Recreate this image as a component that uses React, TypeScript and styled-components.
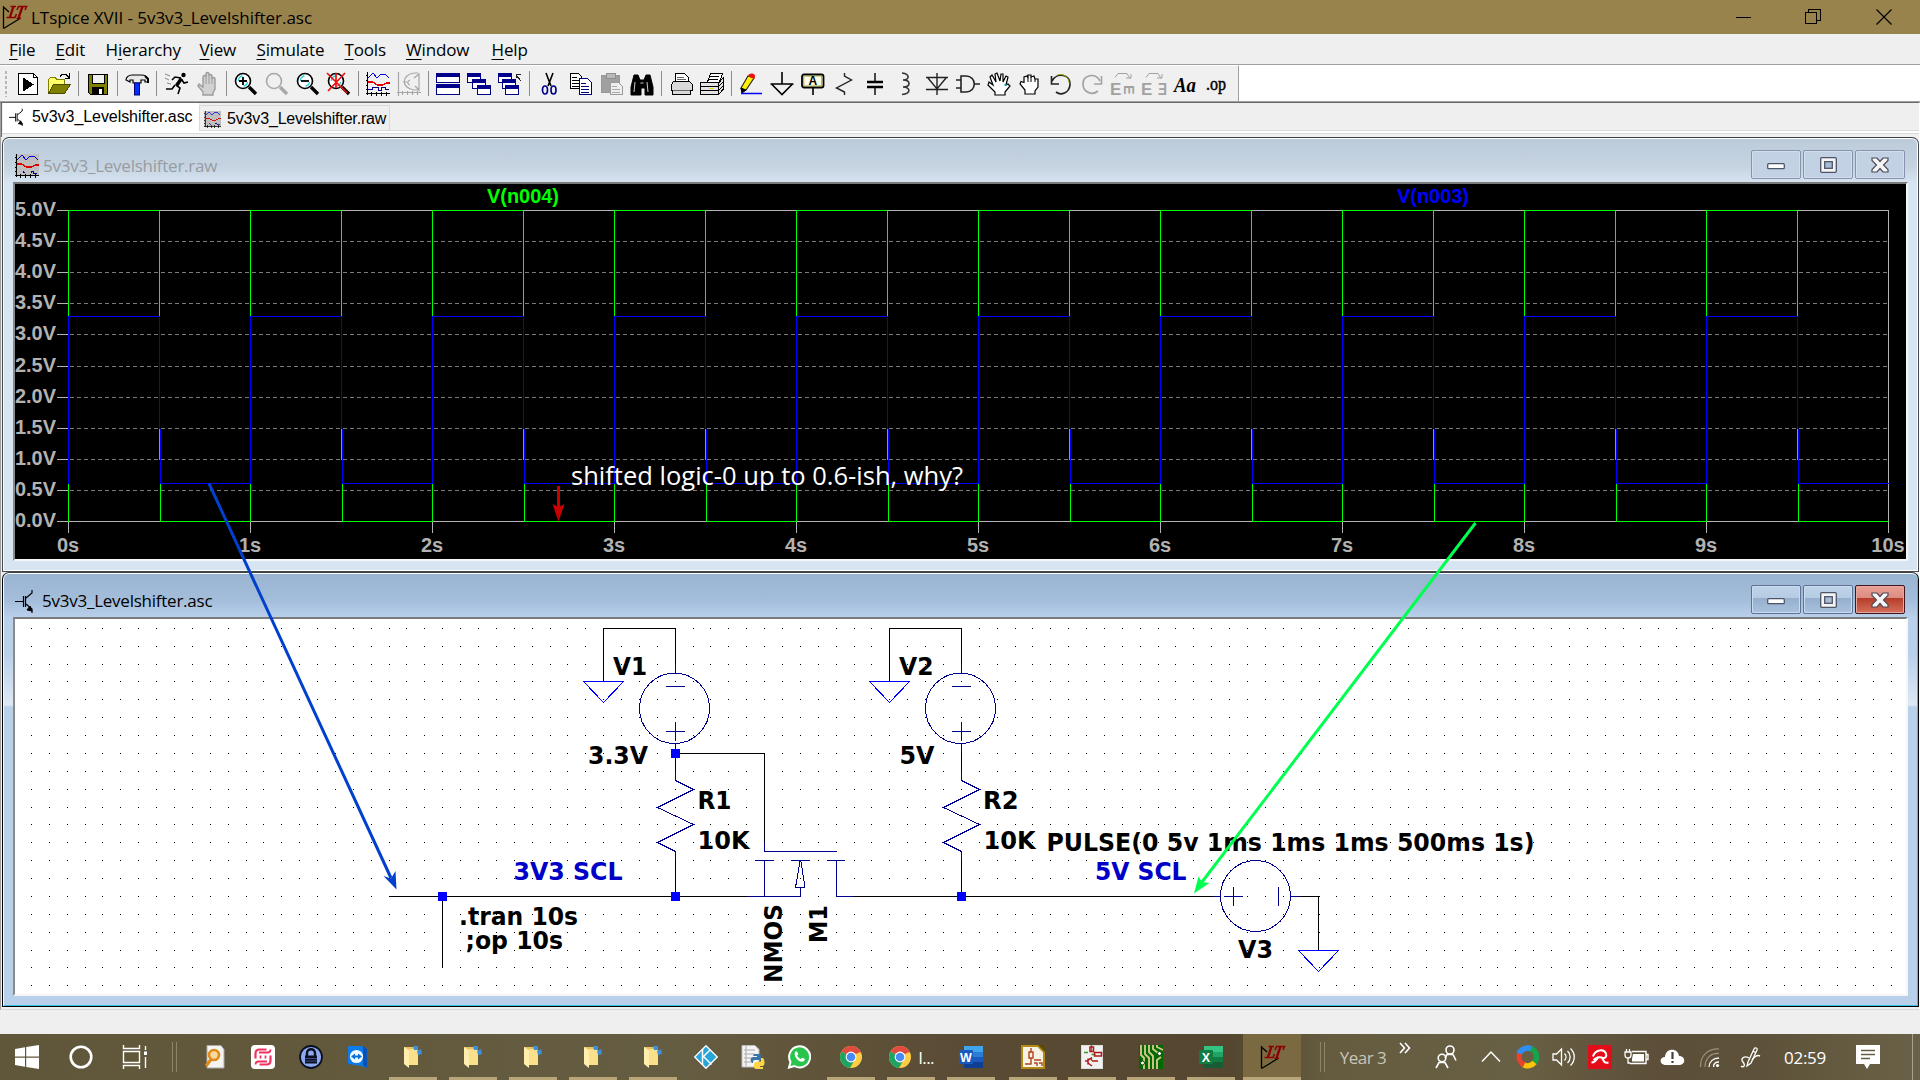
import React from "react";
import styled, { createGlobalStyle, css } from "styled-components";

const UI = `"Open Sans", "Noto Sans", sans-serif`;
const ARIAL = `"Liberation Sans", Arial, sans-serif`;
const TAHOMA = `"DejaVu Sans Condensed", "DejaVu Sans", sans-serif`;

const Global = createGlobalStyle`
  html, body { margin: 0; padding: 0; background: #f0f0f0; }
  * { box-sizing: border-box; }
  svg { display: block; }
`;

const Desktop = styled.div`
  position: relative;
  width: 1920px;
  height: 1080px;
  overflow: hidden;
  display: flex;
  flex-direction: column;
  background: #f0f0f0;
  font-family: ${UI};
  color: #000;
`;

/* ---------- Title bar ---------- */

const TitleBar = styled.header`
  height: 34px;
  background: #98834d;
  display: flex;
  align-items: center;
  padding-left: 2px;
  padding-right: 1px;
`;

const AppTitle = styled.h1`
  margin: 1px 0 0 5px;
  flex: 1;
  font-size: 17px;
  font-weight: 400;
  line-height: 32px;
  letter-spacing: -0.04px;
  white-space: nowrap;
`;

const CaptionButton = styled.div`
  width: 70px;
  height: 34px;
  display: flex;
  align-items: center;
  justify-content: center;
`;

/* ---------- Menu ---------- */

const MenuBar = styled.nav`
  height: 31px;
  border-bottom: 1px solid #a0a0a0;
  background: #efefef;
  display: flex;
  padding-left: 9px;
`;

const MenuItem = styled.span<{ $w: number }>`
  width: ${(p) => p.$w}px;
  font-size: 17px;
  line-height: 31px;
  letter-spacing: -0.15px;
  white-space: nowrap;
`;

const Key = styled.u`
  text-underline-offset: 3px;
  text-decoration-thickness: 1px;
`;

/* ---------- Toolbar ---------- */

const ToolStrip = styled.div`
  height: 37px;
  background: #fff;
  border-bottom: 1px solid #a0a0a0;
  display: flex;
`;

const ToolBar = styled.div`
  width: 1239px;
  background: #f0f0f0;
  border-top: 1px solid #fff;
  border-right: 1px solid #a0a0a0;
  display: flex;
  align-items: center;
`;

const Grip = styled.div`
  width: 12px;
  height: 27px;
  margin-right: 0.5px;
  background-image: radial-gradient(circle, #b4b4b4 1.1px, transparent 1.4px);
  background-size: 4px 5px;
  background-repeat: repeat-y;
  background-position: 4px 0;
`;

const Tool = styled.div`
  width: 31px;
  display: flex;
  justify-content: center;
`;

const ToolSeparator = styled.div`
  width: 8px;
  height: 25px;
  display: flex;
  padding-left: 3px;
  &::after { content: ""; width: 1px; background: #8c8c8c; }
`;

/* ---------- Document tabs ---------- */

const MdiArea = styled.main`
  height: 908px;
  border-left: 1px solid #a0a0a0;
  border-top: 1px solid #696969;
  border-right: 1px solid #fff;
  border-bottom: 1px solid #d9d9d9;
  display: flex;
  flex-direction: column;
`;

const TabStrip = styled.div`
  height: 34px;
  padding-left: 1px;
  border-left: 1px solid #696969;
  display: flex;
  align-items: flex-start;
  background: linear-gradient(#efefef 27px, #d9d9d9 27px, #d9d9d9 28px, #fff 28px, #fff 30px, #d9d9d9 30px, #d9d9d9 31px, #f0f0f0 31px);
`;

const Tab = styled.div<{ $active?: boolean; $track: number }>`
  display: flex;
  align-items: center;
  font-family: ${ARIAL};
  font-size: 16px;
  letter-spacing: ${(p) => p.$track}px;
  white-space: nowrap;
  ${(p) =>
    p.$active
      ? css`
          width: 196px;
          height: 30px;
          background: #fff;
          padding: 0 0 3px 6px;
          gap: 9px;
        `
      : css`
          width: 191px;
          height: 26px;
          margin-top: 2px;
          border: 1px solid #d9d9d9;
          border-bottom: 0;
          padding-left: 4px;
          padding-top: 1px;
          gap: 6px;
        `}
`;

/* ---------- Child windows ---------- */

const Child = styled.section<{ $active?: boolean }>`
  height: 435px;
  flex: none;
  margin-left: 1px;
  width: 1917px;
  border: 1px solid ${(p) => (p.$active ? "#000" : "#45484c")};
  border-top-color: #3c3f43;
  border-radius: 7px 7px 0 0;
  box-shadow: inset 0 1px 0 #fff, inset 1px 0 0 #f4f8fc,
    inset 0 -1px 0 ${(p) => (p.$active ? "#2fc4e4" : "#fff")},
    inset -1px 0 0 ${(p) => (p.$active ? "#2fc4e4" : "#fff")};
  padding: 1px 10px 0 10px;
  background: ${(p) =>
    p.$active
      ? "linear-gradient(#99b4d1 0, #a3bdda 27px, #bad1ec 45px, #b9d0ea 80px, #dce8f5 132px, #b9d0ea 134px)"
      : "linear-gradient(#bccbda 0, #c5d3e1 28px, #d7e4f2 45px)"};
`;

const ChildTitle = styled.div<{ $active?: boolean }>`
  height: 43px;
  display: flex;
  align-items: center;
  padding: 11px 3px 0 2px;
  gap: ${(p) => (p.$active ? 9 : 4)}px;
  color: ${(p) => (p.$active ? "#000" : "#989ca2")};
  font-size: 17px;
  letter-spacing: -0.24px;
  white-space: nowrap;
`;

const ChildName = styled.span`
  flex: 1;
  line-height: 24px;
`;

const ChildButtons = styled.div`
  display: flex;
  gap: 2px;
  margin-top: -8px;
  padding-top: 5px;
`;

const ChildButton = styled.div<{ $kind: "idle" | "live" | "close" }>`
  width: 50px;
  height: 29px;
  border-radius: 2px;
  display: flex;
  align-items: center;
  justify-content: center;
  border: 1px solid
    ${(p) => (p.$kind === "idle" ? "#8793ad" : p.$kind === "live" ? "#5f7294" : "#43141b")};
  box-shadow: inset 0 0 0 1px
    ${(p) => (p.$kind === "idle" ? "#d3dfee" : p.$kind === "live" ? "#cadcf0" : "#e6a99f")};
  background: ${(p) =>
    p.$kind === "idle"
      ? "#c3d1e4"
      : p.$kind === "live"
        ? "linear-gradient(#bfd3ea 0, #b6cce4 44%, #94aecb 45%, #a9c2e0 100%)"
        : "linear-gradient(#e9a097 0, #dc8c80 44%, #b53c28 45%, #d3705c 100%)"};
`;

const Client = styled.div<{ $dark?: boolean }>`
  height: 379px;
  width: 1895px;
  border-style: solid;
  border-width: 2px;
  border-color: #7b7b7b #f4f6f8 #f4f6f8 #8a8a8a;
  background: ${(p) => (p.$dark ? "#000" : "#fff")};
`;

const StatusBar = styled.footer`
  height: 24px;
  flex: none;
  background: #efefef;
`;

/* ---------- Taskbar ---------- */

const TaskBar = styled.footer`
  height: 46px;
  flex: none;
  display: flex;
  background: linear-gradient(90deg, #60563a 0, #635a3e 400px, #655d42 680px, #5f5339 830px, #5a4b35 960px, #54462f 1230px, #655c40 1330px, #686044 1520px, #5c4e38 1660px, #5d5239 1760px, #6a6248 1920px);
`;

const Slot = styled.div<{ $w: number; $open?: boolean; $active?: boolean; $gap?: number }>`
  width: ${(p) => p.$w}px;
  margin-left: ${(p) => p.$gap ?? 0}px;
  flex: none;
  display: flex;
  align-items: center;
  justify-content: center;
  gap: 6px;
  white-space: nowrap;
  background: ${(p) => (p.$active ? "#7b6a41" : "transparent")};
  ${(p) =>
    p.$open &&
    css`
      background-image: linear-gradient(#b8a678, #b8a678);
      background-size: ${p.$active ? "100%" : "48px"} 3px;
      background-repeat: no-repeat;
      background-position: center bottom;
    `}
`;

const TaskGrip = styled.div<{ $w: number }>`
  width: ${(p) => p.$w}px;
  height: 30px;
  margin-top: 8px;
  flex: none;
  display: flex;
  justify-content: center;
  gap: 3px;
  &::before, &::after { content: ""; width: 1px; background: #8c8468; }
`;

const TrayText = styled.span<{ $dim?: boolean; $track: number }>`
  color: ${(p) => (p.$dim ? "#c9c5b8" : "#fff")};
  font-size: 17px;
  letter-spacing: ${(p) => p.$track}px;
`;

const RaisedSlot = styled(Slot)`
  padding-bottom: 18px;
`;

const ShowDesktop = styled.div`
  margin-left: auto;
  width: 8px;
  border-left: 1px solid #a8a28c;
`;

const Overlay = styled.svg`
  position: absolute;
  inset: 0;
  pointer-events: none;
`;

/* ---------- Icon frame ---------- */

type IconProps = { children: React.ReactNode; size?: number; w?: number; smooth?: boolean };
const Icon = ({ children, size = 24, w, smooth }: IconProps) => (
  <svg
    width={w ?? size}
    height={size}
    viewBox={`0 0 ${w ?? 24} 24`}
    preserveAspectRatio="none"
    overflow="visible"
    fill="none"
    stroke="#000"
    shapeRendering={smooth ? "auto" : "crispEdges"}
  >
    {children}
  </svg>
);

const LtLogo = () => (
  <Icon smooth>
    <path d="M1.500 23.500V2L7 7M1.500 23.500L18 13.500" strokeWidth="1.300" />
    <g stroke="#8b0000" strokeWidth="2.300">
      <path d="M11.500 1.500L8 12" />
      <path d="M8.500 1.500h5.500M4.500 12.500h8.500l1.500-3.500" strokeWidth="1.500" />
      <path d="M20.500 1.500L16.500 13" />
      <path d="M15 5l1.500-3.500h8L23 5M14.500 13.200h4.500" strokeWidth="1.500" />
    </g>
  </Icon>
);

const PlotIcon = ({ size = 24, grey }: { size?: number; grey?: boolean }) => (
  <Icon size={size}>
    {grey && <rect x="0" y="0" width="24" height="22" fill="#bfbfbf" stroke="none" />}
    <path d="M1.500 0v23M0 21.500h24M0 3.500h2M0 8.500h2M0 13.500h2M0 17.500h2M5.500 20v4M10.500 20v4M15.500 20v4M20.500 20v4" />
    <path d="M2 6l5-5 4 5 4-4 4 0 4 4" stroke="#0000e0" />
    <path d="M2 10h5l4 3h6l3-2h4" stroke="#e00000" strokeWidth="1.300" />
    {grey
      ? <path d="M8 18.500h2M8 17v2M16 19v-2h2v2h4" stroke="#00008b" />
      : <path d="M2 17.500h4v-2h6v3h3v-3h4v2h4" stroke="#00008b" />}
  </Icon>
);

const Transistor = ({ w = 18, size = 24 }: { w?: number; size?: number }) => (
  <svg width={w} height={size} viewBox="0 0 18 24" fill="none" stroke="#000" preserveAspectRatio="none">
    <path d="M0 12.500h9M8.500 7v11M10.500 7v11M11 9l6-5V1M11 15l6 5v4" strokeWidth="1.200" />
    <path d="M17 22l-5-1 3-4z" fill="#000" />
  </svg>
);

const Lens = ({ grey, children }: { grey?: boolean; children?: React.ReactNode }) => (
  <Icon smooth>
    <circle cx="9" cy="9" r="7.500" stroke={grey ? "#a8a8a8" : "#000"} fill={grey ? "#f0f0f0" : "#fff"} strokeWidth="1.600" />
    {!grey && <path d="M4.500 9a4.500 4.500 0 0 1 4-5M13.500 10a4.500 4.500 0 0 1-4 4" stroke="#27d3dd" strokeWidth="1.400" />}
    <path d="M15 15l7 7" stroke={grey ? "#a8a8a8" : "#000"} strokeWidth="3.400" />
    {children}
  </Icon>
);

const MiniWin = ({ x, y, w = 13, h = 9 }: { x: number; y: number; w?: number; h?: number }) => (
  <g>
    <rect x={x + 0.5} y={y + 0.5} width={w} height={h} fill="#fff" stroke="#00008b" />
    <rect x={x} y={y} width={w + 1} height="4" fill="#00008b" stroke="none" />
  </g>
);

const Bold = ({ x, y, s, t, f, ...r }: { x: number; y: number; s: number; t: string; f?: string } & React.SVGProps<SVGTextElement>) => (
  <text x={x} y={y} fontSize={s} fontWeight="700" fill={f ?? "#000"} stroke="none" fontFamily={ARIAL} {...r}>{t}</text>
);

const G = "#a2a2a2";

const toolGroups: React.ReactNode[][] = [
  [
    <Icon><path d="M2.500 1.500h15l4 4v17h-19z" fill="#fff" /><path d="M17.500 1.500v4h4" /><path d="M7 6l10 6.500L7 19z" fill="#000" /></Icon>,
    <Icon><path d="M1.500 21V7.500l2-2h5l1 2h8v4" fill="#ffff66" stroke="#808000" /><path d="M1.500 21.500l5-9h17l-6 9z" fill="#808000" stroke="#4a4a00" /><path d="M13 4.500l2-2h4l3 3M22.500 1v5h-5" /></Icon>,
  ],
  [<Icon><path d="M2.500 2.500h19v20H4.500l-2-2z" fill="#808000" /><rect x="6.500" y="2.500" width="12" height="9" fill="#f0f0f0" /><rect x="6.500" y="15.500" width="11" height="7" fill="#000" /><rect x="13" y="17" width="3" height="5" fill="#fff" stroke="none" /></Icon>],
  [<Icon smooth><path d="M1 8c0-3 3-5 6-5h9c4 0 7 2 7 5v2h-3V8h-4v3H8V8H5v2z" fill="#e8e8e8" strokeWidth="1.200" /><path d="M20 4l3 3v4" strokeWidth="2" /><rect x="9.500" y="11" width="5" height="12" fill="#0030ff" stroke="#00007a" /></Icon>],
  [
    <Icon smooth><circle cx="19.500" cy="3" r="2.200" fill="#000" stroke="none" /><path d="M17.500 6.500l-5 7" strokeWidth="3.600" /><path d="M17 6l-6-1-3 3M18 8l2 3 4-1M12 13l4 3-2 6M11 13l-3 4H2" strokeWidth="1.600" /><path d="M1 2l5 2M1 6l4 2M3 11l4 1" stroke="#888" /></Icon>,
    <Icon smooth><path d="M8 23v-3L3 14l1-2 4 3V5c0-2 3-2 3 0V2c0-2 3-2 3 0v2c0-2 3-2 3 0v3c0-2 3-2 3 0v10l-2 4v2z" fill="#d2d2d2" stroke="#9c9c9c" strokeWidth="1.400" /><path d="M11 5v7M14 4v8M17 6v6" stroke="#9c9c9c" /></Icon>,
  ],
  [
    <Lens><path d="M9 5v8M5 9h8" strokeWidth="1.800" /></Lens>,
    <Lens grey />,
    <Lens><path d="M5 9h8" strokeWidth="1.800" /></Lens>,
    <Lens><path d="M0 1l20 20M18 1L1 19M9 1v15" stroke="#f01010" strokeWidth="1.700" /></Lens>,
  ],
  [
    <PlotIcon />,
    <Icon smooth><path d="M1.500 0v24M0 20.500h24M5.500 19v4M10.500 19v4M15.500 19v4M20.500 19v4M21 1h-4C4 3 4 16 17 18h5M6 10h4M17 6l5-4v16l-4-4M13 8c-3 1-3 4 0 5" stroke="#a6a6a6" strokeWidth="1.200" /></Icon>,
  ],
  [
    <Icon><MiniWin x={0} y={1} w={23} h={9} /><MiniWin x={0} y={12} w={23} h={10} /></Icon>,
    <Icon><MiniWin x={0} y={1} /><MiniWin x={5} y={7} /><MiniWin x={10} y={13} /></Icon>,
    <Icon><MiniWin x={0} y={1} /><MiniWin x={4} y={7} /><MiniWin x={7} y={13} /><path d="M23 9l-5-6M18.500 6V2.500H23" stroke="#222" /></Icon>,
  ],
  [
    <Icon smooth><path d="M9 1l5 13M16 1l-5 13" strokeWidth="1.600" /><ellipse cx="8" cy="18" rx="2.500" ry="4" stroke="#00008b" strokeWidth="1.700" /><ellipse cx="16.500" cy="18" rx="2.500" ry="4" stroke="#00008b" strokeWidth="1.700" /></Icon>,
    <Icon><path d="M2.500 1.500h8l3 3v12h-11z" fill="#fff" /><path d="M4 5h5M4 8h8M4 11h8M4 14h8" /><path d="M11.500 6.500h8l4 4v12h-12z" fill="#fff" stroke="#00007a" /><path d="M13 11h5M13 14h8M13 17h8M13 20h8" stroke="#00007a" /></Icon>,
    <Icon><path d="M2.500 3.500h18v17h-18z" fill="#a0a0a0" stroke="#989898" /><rect x="7" y="1" width="9" height="5" fill="#b9b9b9" stroke="#8f8f8f" /><path d="M11.500 10.500h8l4 4v8h-12z" fill="#eee" stroke="#9b9b9b" /><path d="M13 14h5M13 17h8M13 20h8" stroke="#aaa" /></Icon>,
    <Icon smooth><path d="M4 3h4l2 5h4l2-5h4l3 12v8h-8v-7h-4v7H1v-8z" fill="#000" /><path d="M5 10l-1 10M17 10l1 10M10.500 11h3" stroke="#ccc" /></Icon>,
  ],
  [
    <Icon><path d="M6.500 10V1.500h9l4 4V10" fill="#fff" /><path d="M4.500 9.500h16l3 3v6h-2v4h-18v-4h-1v-6z" fill="#d9d9d9" /><path d="M4 18.500h17M8 5.500h7M8 7.500h9" stroke="#666" /></Icon>,
    <Icon><path d="M7.500 10l3-8.500h12l-3 8.500" fill="#fff" /><path d="M10 4.500h9M9 7.500h9" /><path d="M.5 10.500h18v12H.5zM18.500 22.500l4.500-5V6l-4 4.500" fill="#e3e3e3" /><path d="M1 14.500h17M1 18.500h17M19 14l4-4M19 18l4-4" /><path d="M9 16.500h5" stroke="#e0e000" /></Icon>,
  ],
  [
    <Icon smooth><path d="M9 4l6 2-8 12-4 2-1-4z" fill="#ffef00" stroke="#222" strokeWidth="1.100" /><path d="M9 4c1-4 8-3 7 1l-1 2z" fill="#f01010" stroke="none" /><path d="M2 16l5 2-4 3z" fill="#000" /><path d="M2 21.500h21" stroke="#0000ff" strokeWidth="1.500" /></Icon>,
    <Icon smooth><path d="M12 0v12M.5 12h23M1.500 12L12 22.500 22.500 12" strokeWidth="1.600" /></Icon>,
    <Icon smooth><rect x="1" y="2.500" width="21.500" height="13" rx="2" strokeWidth="1.800" fill="#fdfde8" /><rect x="2.800" y="4" width="18" height="10" stroke="#8a8a20" strokeWidth=".8" /><Bold x={7.5} y={13.3} s={12} t="A" /><path d="M12 16v7" strokeWidth="1.600" /></Icon>,
    <Icon smooth><path d="M12.500 1v3l7 4-15 8 8 4v3" strokeWidth="1.400" stroke="#222" /></Icon>,
    <Icon smooth><path d="M12 1v9M12 15v8" strokeWidth="1.400" /><path d="M4 10h16M4 15h16" strokeWidth="2.400" /></Icon>,
    <Icon smooth><path d="M8 1c8 1 8 7 1 7 8 0 8 7 0 7 8 0 8 7-1 7.500" strokeWidth="1.600" stroke="#333" /></Icon>,
    <Icon smooth><path d="M12 1v22M1 5.500h22M3 6l9 11 9-11M1 17.500h22" strokeWidth="1.400" stroke="#222" /></Icon>,
    <Icon smooth><path d="M5 4h5c11 0 11 16 0 16H5zM0 8h5M0 16h5M18 12h6" strokeWidth="1.600" stroke="#222" /></Icon>,
    <Icon smooth><path d="M8 23v-3L1 13l1-3 4 3L3 5l2-2 4 7L8 2l2-1 3 8 1-7 2 0v8l3-6 2 1-2 8 2-1 2 2-5 6v3z" fill="#fff" strokeWidth="1.200" /><path d="M17 13h3" stroke="#00b8c4" /></Icon>,
    <Icon smooth><path d="M7 22v-4L2 12l1-2.500 3 1V5l3-1 1 2V3h3v2l3-1 1 3 3 0v8l-3 4v3z" fill="#fff" strokeWidth="1.200" /><path d="M10 6v4M13 5v5M17 7v3" /></Icon>,
    <Icon smooth><path d="M3 9c5-9 19-7 18 4-1 8-9 11-14 7" strokeWidth="1.700" stroke="#222" /><path d="M2.500 4v8H10" strokeWidth="1.600" stroke="#222" /><path d="M8 3c6-2 12 2 12 8" stroke="#a5a500" strokeWidth=".9" /></Icon>,
    <Icon smooth><path d="M20 9C15 0 3 3 3 12c0 8 9 12 15 7" strokeWidth="1.700" stroke={G} /><path d="M21.500 4v8H14" strokeWidth="1.600" stroke={G} /></Icon>,
    <Icon smooth><path d="M4 5.500l3-4h9l3 5M15 6h5V2" stroke={G} /><Bold x={-1} y={23} s={17} t="E" f={G} /><Bold x={0} y={0} s={14.5} t="E" f={G} transform="translate(13 13) rotate(90)" /></Icon>,
    <Icon smooth><path d="M4 5.500l3-4h9l3 5M15 6h5V2" stroke={G} /><Bold x={-1} y={23} s={17} t="E" f={G} /><Bold x={0} y={0} s={17} t="E" f={G} transform="translate(25 23) scale(-.8 1)" /></Icon>,
    <Icon smooth><Bold x={1} y={20} s={20} t="Aa" fontStyle="italic" fontFamily='"Liberation Serif", serif' textLength={22} lengthAdjust="spacingAndGlyphs" /></Icon>,
    <Icon smooth><Bold x={2} y={18} s={18} t=".op" fontWeight="400" stroke="#000" strokeWidth={0.5} fontFamily='"Liberation Serif", serif' textLength={20} lengthAdjust="spacingAndGlyphs" /></Icon>,
  ],
];

/* ---------- Waveform plot ---------- */

const plotX = (t: number) => Math.floor(68 + 182.07 * t) + 0.5;
const plotY = (v: number) => Math.round(521 - 62.2 * v) + 0.5;

const Plot = () => {
  const volts = Array.from({ length: 11 }, (_, i) => i * 0.5);
  const secs = Array.from({ length: 11 }, (_, i) => i);
  const cycles = Array.from({ length: 10 }, (_, i) => i);
  const right = plotX(10);
  return (
    <svg width="1891" height="375" viewBox="15 184 1891 375" fill="none">
      <g shapeRendering="crispEdges">
        {volts.slice(1, -1).map((v) => (
          <path key={v} d={`M70 ${plotY(v)}H${right}`} stroke="#7a7a7a" strokeDasharray="4 3" />
        ))}
        <path d={`M${plotX(0)} 210.500H${right}V521.500H${plotX(0)}Z`} stroke="#b4b4b4" />
        {volts.map((v) => <path key={v} d={`M57 ${plotY(v)}H68`} stroke="#b4b4b4" />)}
        {secs.map((s) => <path key={s} d={`M${plotX(s)} 521V533`} stroke="#b4b4b4" />)}
        {cycles.map((c) => {
          const a = plotX(c);
          const b = plotX(c + 0.5);
          const d = plotX(c + 1);
          return (
            <g key={c}>
              <path d={`M${a} 522V483M${a} 316V210.500H${b}V316M${b + 1} 483V521.500H${d}`} stroke="#00ff00" />
              <path d={`M${a} 484V316.500H${b}V429M${b + 1} 429V483.500H${d}`} stroke="#0000ff" />
              <path d={`M${b} 429V460`} stroke="#00ff00" />
            </g>
          );
        })}
      </g>
      <g fontFamily={ARIAL} fontWeight="700" fontSize="20" fill="#b2b2b2">
        {volts.map((v) => (
          <text key={v} x="15" y={plotY(v) + 5.9} textLength="41" lengthAdjust="spacingAndGlyphs">{`${v.toFixed(1)}V`}</text>
        ))}
        {secs.map((s) => (
          <text key={s} x={plotX(s) - 0.5} y="551.500" textAnchor="middle">{`${s}s`}</text>
        ))}
        <text x="487" y="203" fill="#00ff00" textLength="72" lengthAdjust="spacingAndGlyphs">V(n004)</text>
        <text x="1397" y="203" fill="#0000ff" textLength="72" lengthAdjust="spacingAndGlyphs">V(n003)</text>
      </g>
    </svg>
  );
};

/* ---------- Schematic ---------- */

const WIRE = "#000";
const PART = "#00008b";
const dotRows = [628, 646, 664, 681, 699, 717, 735, 753, 771, 789, 807, 824, 842, 860, 878, 896, 914, 932, 950, 967, 985];

const dotPath = dotRows
  .map((y) => Array.from({ length: 105 }, (_, n) => `M${Math.floor(31.4 + 17.884 * n)} ${y + 0.5}h1`).join(""))
  .join("");

const Ground = ({ x, y }: { x: number; y: number }) => (
  <path d={`M${x - 20} ${y}H${x + 20}L${x} ${y + 21}Z`} stroke="#0000ff" />
);

const Source = ({ x }: { x: number }) => (
  <g>
    <path d={`M${x - 72} 681V628.500H${x}V664M${x} 753V771`} stroke={WIRE} />
    <Ground x={x - 72} y={681.5} />
    <g stroke={PART}>
      <path d={`M${x} 664V673M${x} 743V753M${x - 9.5} 686.500h19M${x - 9.5} 731.500h19M${x} 722v19`} />
      <ellipse cx={x - 1} cy="708.300" rx="35" ry="35.200" />
    </g>
  </g>
);

const Resistor = ({ x }: { x: number }) => (
  <g>
    <path d={`M${x} 771V780.500L${x + 18} 789.500L${x - 18} 807.500L${x + 18} 824.500L${x - 18} 842.500L${x} 851.500V860`} stroke={PART} />
    <path d={`M${x} 860V896`} stroke={WIRE} />
  </g>
);

const Junction = ({ x, y }: { x: number; y: number }) => (
  <rect x={x - 4.5} y={y - 4.5} width="9" height="9" fill="#0000ff" />
);

const labels: [string, number, number, number, string?][] = [
  ["V1", 613, 674.5, 34], ["3.3V", 588, 763.5, 60], ["R1", 697.5, 808.5, 34], ["10K", 697.5, 848.5, 52],
  ["V2", 899, 674.5, 34.5], ["5V", 899.5, 763.5, 35], ["R2", 983, 808.5, 35.5], ["10K", 983.5, 848.5, 52],
  ["PULSE(0 5v 1ms 1ms 1ms 500ms 1s)", 1046.5, 850.5, 488], ["V3", 1238, 957.5, 35],
  [".tran 10s", 459, 924.5, 119], [";op 10s", 465.5, 948.5, 97.5],
  ["3V3 SCL", 513.5, 879.5, 109, "#0000c8"], ["5V SCL", 1095, 879.5, 91.5, "#0000c8"],
];

const Schematic = () => (
  <svg width="1891" height="375" viewBox="15 619 1891 375" fill="none">
    <g shapeRendering="crispEdges">
      <path d={dotPath} stroke="#000" />
      <Source x={675.5} />
      <Source x={961.5} />
      <path d="M675.500 753.500V771M675.500 753.500H764.500V842M389 896.500H747M853 896.500H1213M442.500 896V968M1300 896.500H1318.500V950" stroke={WIRE} />
      <Resistor x={675.5} />
      <Resistor x={961.5} />
      <g stroke={PART}>
        <path d="M764.500 842V851.500H837M755 860.500h19M791 860.500h19M827 860.500h18M764.500 860V896M747 896.500H800.500V887.500M795.500 887.500h9.500L801 861.500h-1ZM836.500 860V896.500H853" />
        <path d="M1213 896.500H1221M1290 896.500H1300M1224 896.500h19M1233.500 887v19M1278.500 887v19" />
        <ellipse cx="1255.500" cy="896" rx="35" ry="35.500" />
      </g>
      <Ground x={1318.5} y={950.5} />
      <Junction x={675.5} y={753.5} />
      <Junction x={675.5} y={896.5} />
      <Junction x={442.5} y={896.5} />
      <Junction x={961.5} y={896.5} />
    </g>
    <g fontFamily={TAHOMA} fontWeight="700" fontSize="25" fill="#000">
      {labels.map(([t, x, y, w, c], i) => (
        <text key={i} x={x} y={y} textLength={w} lengthAdjust="spacingAndGlyphs" fill={c}>{t}</text>
      ))}
      <text transform="translate(782 983) rotate(-90)" textLength="79" lengthAdjust="spacingAndGlyphs">NMOS</text>
      <text transform="translate(827 943) rotate(-90)" textLength="38" lengthAdjust="spacingAndGlyphs">M1</text>
    </g>
  </svg>
);

/* ---------- Child window controls ---------- */

const Controls = ({ active }: { active?: boolean }) => (
  <ChildButtons>
    <ChildButton $kind={active ? "live" : "idle"}>
      <svg width="18" height="10"><rect x=".7" y="3.700" width="16.600" height="5" rx="1" fill="#fff" stroke="#4d5468" strokeWidth="1.300" /></svg>
    </ChildButton>
    <ChildButton $kind={active ? "live" : "idle"}>
      <svg width="17" height="16"><rect x=".7" y=".7" width="15.600" height="14.600" rx="1" fill="#f4f4f4" stroke="#4d5468" strokeWidth="1.300" /><rect x="4.700" y="4.700" width="7.600" height="6.600" fill="#a9bcd6" stroke="#4d5468" strokeWidth="1.300" /></svg>
    </ChildButton>
    <ChildButton $kind={active ? "close" : "idle"}>
      <svg width="18" height="16"><path d="M1 1h5l3 3.500L12 1h5v2.500L12.500 8l4.500 4.500V15h-5L9 11.500 6 15H1v-2.500L5.500 8 1 3.500z" fill="#f6f6f6" stroke="#4d4a58" strokeWidth="1.200" /></svg>
    </ChildButton>
  </ChildButtons>
);

/* ---------- Taskbar icons ---------- */

const Folder = () => (
  <svg width="20" height="24" viewBox="0 0 20 24">
    <path d="M1 2h11v17H1z" fill="#e9c15c" /><path d="M6 4h9v16H6z" fill="#fbe08c" /><path d="M1 2l5 3v18l-5-4z" fill="#ffeeae" />
    <path d="M10 1h5v4h-4zM14 6l4-2 1 5-4 1z" fill="#3d8fdd" />
  </svg>
);

const Chrome = () => (
  <svg width="24" height="24" viewBox="0 0 24 24">
    <circle cx="12" cy="12" r="11" fill="#ffce44" />
    <path d="M12 12L2.500 6.500A11 11 0 0 1 21.500 6.500z" fill="#e04a3f" />
    <path d="M12 12L2.500 6.500A11 11 0 0 0 11 23l4.800-8.500z" fill="#1da462" />
    <path d="M12 6.500h9.500a11 11 0 0 1 .6 1z" fill="#e04a3f" />
    <circle cx="12" cy="12" r="5.400" fill="#fff" /><circle cx="12" cy="12" r="4.300" fill="#4a8af4" />
  </svg>
);

const Office = ({ letter, shades }: { letter: string; shades: string[] }) => (
  <svg width="24" height="24" viewBox="0 0 24 24">
    <rect x="5" y="1" width="19" height="6" fill={shades[0]} /><rect x="5" y="7" width="19" height="5.500" fill={shades[1]} />
    <rect x="5" y="12" width="19" height="5.500" fill={shades[2]} /><rect x="5" y="17" width="19" height="6" fill={shades[3]} />
    <rect x="0" y="5" width="14" height="14" rx="1" fill={shades[4]} />
    <text x="7" y="16.500" fontSize="12.500" fontWeight="700" fill="#fff" textAnchor="middle" fontFamily={ARIAL}>{letter}</text>
  </svg>
);

const S = ({ w = 24, children }: { w?: number; children: React.ReactNode }) => (
  <svg width={w} height="24" viewBox={`0 0 ${w} 24`} fill="none" stroke="#fff">{children}</svg>
);

const Task = () => (
  <TaskBar>
    <Slot $w={54}><S><path d="M0 4l10-1.700V11.500H0zM11.200 2.100L24 0v11.500H11.200zM0 12.700h10v9L0 20zM11.200 12.700H24V24l-12.800-2z" fill="#fff" stroke="none" /></S></Slot>
    <Slot $w={54}><S><circle cx="12" cy="12" r="10.300" strokeWidth="2.600" /></S></Slot>
    <Slot $w={54}><S w={26}><path d="M1.500 0v3.500h16V0M1.500 6.500h16v11h-16zM1.500 24v-3.500h16V24M23.500 1v4M23.500 12v11" strokeWidth="1.400" /><rect x="22" y="6.500" width="3" height="3.500" fill="#fff" stroke="none" /></S></Slot>
    <TaskGrip $w={24} />
    <Slot $w={48} $gap={5}><S w={20}><path d="M2 .5h14l3 4V23H2z" fill="#f4f4f2" stroke="#aaa" /><circle cx="9" cy="10" r="5" stroke="#e08a1a" strokeWidth="2.600" fill="#f8d9a0" /><path d="M6 14.500L1 21" stroke="#e08a1a" strokeWidth="3.200" /></S></Slot>
    <Slot $w={48}><S><rect width="24" height="24" rx="4" fill="#fff" stroke="none" /><path d="M4.500 13.500V8.500c0-3 1.500-4 4-4h7M19.500 10.500v5c0 3-1.500 4-4 4h-7" stroke="#f0325f" strokeWidth="2.200" /><path d="M8 7.500h8.500c2 0 3-.5 3-3M16 16.500H7.500c-2 0-3 .5-3 3" stroke="#f0325f" strokeWidth="1.800" /><path d="M9.500 10.500v3M14.500 10.500v3" stroke="#f0325f" strokeWidth="1.800" /></S></Slot>
    <Slot $w={47}><S><circle cx="12" cy="12" r="11" fill="#8da9ef" stroke="#0b1020" strokeWidth="1.800" /><path d="M8 11V8c0-5 8-5 8 0v3" stroke="#0b1020" strokeWidth="2.400" /><rect x="6" y="10.500" width="12" height="8" fill="#0b1020" stroke="none" /><path d="M6 13.500h12M6 16h12" stroke="#526cb5" strokeWidth=".7" /></S></Slot>
    <Slot $w={48}><S w={22}><path d="M1 1l14 0 5 3v19l-5-2-14-2z" fill="#0a7be8" stroke="none" /><path d="M16 1l4 3v19l-4-3z" fill="#0752b8" stroke="none" /><circle cx="9.500" cy="11.500" r="6.600" fill="#f2f8ff" stroke="none" /><path d="M4 11.500l4-3v2h3v-2l4 3-4 3v-2H8v2z" fill="#0a6fd6" stroke="none" /></S></Slot>
    {[0, 1, 2, 3, 4].map((i) => <Slot key={i} $w={60} $open $gap={i ? 0 : 1}><Folder /></Slot>)}
    <Slot $w={46}><S><path d="M12 .7L23.300 12 12 23.300.7 12z" fill="#27a5d8" stroke="#fff" strokeWidth="1.300" /><path d="M8.500 4v16M9 12l7.500-7.500M9.500 11.500l8 8" strokeWidth="1.500" /></S></Slot>
    <Slot $w={48}><S><path d="M1 .5h13l4 4V22H1z" fill="#f4f4f4" stroke="#bbb" /><path d="M3 5h11M3 9h11M3 13h9M3 17h9M5 1v20" stroke="#aaa" /><path d="M13 9h5c1.500 0 2 1 2 2v4h-6c-2 0-2 1-2 3h-1c-2-3-2-5 1-6h4v-1h-4z" fill="#3a75a8" stroke="none" /><path d="M20 13h2c2 2 2 7 0 8h-3v1h3v2h-7c-1 0-2-1-2-2v-3c0-1 1-2 2-2h4c1 0 1-2 1-4z" fill="#ffd545" stroke="none" /></S></Slot>
    <Slot $w={44}><S><path d="M2 22.500l1.500-5.500A10.500 10.500 0 1 1 7.500 21z" fill="#28c44c" stroke="#fff" strokeWidth="2" /><path d="M8 7c1-1 2-1 2.500.5l.7 1.500c0 1-1 1-1 1.800 1 1.700 2 2.500 3.600 3.200.8 0 1-1.300 1.900-1.200l2 1c.5 2-1.200 3-2.700 3C10.500 16.500 6.500 11 8 7z" fill="#fff" stroke="none" /></S></Slot>
    <Slot $w={60} $open><Chrome /></Slot>
    <Slot $w={60} $open><Chrome /><TrayText $track={-0.6}>I...</TrayText></Slot>
    <Slot $w={60} $open><Office letter="W" shades={["#41a5ee", "#2b7cd3", "#185abd", "#103f91", "#185abd"]} /></Slot>
    <Slot $w={60} $open $gap={2}><S><path d="M1 1h16l6 6v16H1z" fill="#f6f3e6" stroke="#b58a12" strokeWidth="2" /><path d="M17 0l7 7V0z" fill="#5b4a08" stroke="none" /><path d="M10 3v4M8 7h4v6H8zM10 13v4M4 19h6v-3M13 15h7M13 18h3v3M18 18h3v3" stroke="#b0441c" strokeWidth="1.400" /></S></Slot>
    <Slot $w={58} $open><S w={22}><rect x=".5" y=".5" width="21" height="23" fill="#f1f1f1" stroke="#ddd" /><path d="M10.500 0v7M10.500 12v4M10.500 9.500h4M3 7.500h4" stroke="#3a9a2a" strokeWidth="1.300" /><path d="M13.500 7.500h7v3.500h-7zM9 2h3.500v4.500H9zM4 16h3M7 13.500v6M7 15l4-2M7 18l4 3M11 16h6" stroke="#b01818" strokeWidth="1.500" /></S></Slot>
    <Slot $w={60} $open><S><rect width="24" height="24" fill="#006a00" stroke="none" /><path d="M2 0v10l3 3v11M6 0v9l4 4v11M10 0v7l4 4v13M14 0v4l5 4h3M18 0v2l6 3M18 24v-9l4-3" stroke="#d3c68a" strokeWidth="1.900" /><circle cx="3.500" cy="18" r="2" fill="#fff" stroke="#0a4a0a" /><circle cx="20.500" cy="8.500" r="2" fill="#fff" stroke="#0a4a0a" /></S></Slot>
    <Slot $w={60} $open><Office letter="X" shades={["#33c481", "#21a366", "#107c41", "#185c37", "#107c41"]} /></Slot>
    <Slot $w={58} $open $active $gap={2}><LtLogo /></Slot>
    <TaskGrip $w={42} />
    <Slot $w={46} $gap={-3}><TrayText $dim $track={-0.5}>Year 3</TrayText></Slot>
    <RaisedSlot $w={13} $gap={12}><svg width="12" height="12" viewBox="0 0 12 12" fill="none" stroke="#fff" strokeWidth="1.600"><path d="M1 1l4.500 5L1 11M6 1l4.500 5L6 11" /></svg></RaisedSlot>
    <Slot $w={22} $gap={24}><S w={22}><circle cx="15" cy="5" r="4" strokeWidth="1.600" /><path d="M10 13l2-3.500h6l3 6" strokeWidth="1.600" /><circle cx="7" cy="13" r="3.800" strokeWidth="1.600" /><path d="M1 23l3-5.500h6L13 23" strokeWidth="1.600" /></S></Slot>
    <Slot $w={20} $gap={24}><S w={20}><path d="M1 16.500L10 7l9 9.500" strokeWidth="1.500" /></S></Slot>
    <Slot $w={24} $gap={15}><S><path d="M3 9a9.500 9.500 0 0 1 13-5" stroke="#2f8ef0" strokeWidth="5.500" /><path d="M15 3.500A9 9 0 0 1 18 18" stroke="#16a34a" strokeWidth="5.500" /><path d="M18.500 17.500A9 9 0 0 1 7 19.500" stroke="#fbc30a" strokeWidth="5.500" /><path d="M8 20A9.500 9.500 0 0 1 3.500 8.500" stroke="#e8432e" strokeWidth="5" /></S></Slot>
    <Slot $w={24} $gap={12}><S><path d="M1 9h3.500l5-5v16l-5-5H1z" strokeWidth="1.300" /><path d="M12.500 8.500c2 2 2 5 0 7M15.500 6c3.500 3 3.500 9 0 12M18.500 3.500c5 5 5 12 0 17" strokeWidth="1.300" /></S></Slot>
    <Slot $w={24} $gap={12}><S><rect width="24" height="24" fill="#e20d18" stroke="none" /><path d="M3.500 17.500c3 0 5-2 7-6M5 11.500C7 4.500 16 3.500 18 8.500c1 3-1 5-3 4.500-2-1-5-2-9.500 2M14 13l2.500 4c1 1 2 1 4 .5" strokeWidth="2" /></S></Slot>
    <Slot $w={25} $gap={12}><S w={25}><path d="M1 7h6v3c0 2-1 3-3 3s-3-1-3-3zM2.500 4v3M5.500 4v3M4 13v5h2" strokeWidth="1.300" /><path d="M8 6.500h14v12H6M22.500 9.500h1.500v5h-1.500" strokeWidth="1.400" /><path d="M9 9h11v7.500H8V14z" fill="#fff" stroke="none" /></S></Slot>
    <Slot $w={25} $gap={11}><S w={25}><path d="M6 20c-7 0-7-8-1-8 0-9 13-10 14-1 7 0 7 9 0 9z" fill="#fff" stroke="none" /><path d="M12.500 7v7M12.500 16v2" stroke="#4a4030" strokeWidth="2.200" /></S></Slot>
    <Slot $w={22} $gap={14}><S w={22}><path d="M1.500 22C1 11 9 3.500 20 4M6 22C6 14 11 8 20 8.500" stroke="#9a937f" strokeWidth="1.200" /><path d="M10 22c0-5 4-9 10-9M14.500 22c0-3 2-5 5.500-5" stroke="#fff" strokeWidth="1.300" /><circle cx="18.500" cy="20.500" r="1.600" fill="#fff" stroke="none" /></S></Slot>
    <Slot $w={22} $gap={19}><S w={22}><path d="M8 17l6-13c1-2 4-1 3 1l-6 13-4 3zM13 6l3 2" strokeWidth="1.300" /><path d="M9 13c-5-3-9 1-6 4 3 4 0 6-2 4M12 15c3-4 6-5 8-4" strokeWidth="1.400" /></S></Slot>
    <Slot $w={46} $gap={20}><TrayText $track={-0.3}>02:59</TrayText></Slot>
    <Slot $w={24} $gap={28}><S><path d="M0 0h24v19H14l-3 5-3-5H0z" fill="#fff" stroke="none" /><path d="M5 5.500h14M5 9.500h14M5 13.500h9" stroke="#665d42" strokeWidth="1.300" /></S></Slot>
    <ShowDesktop />
  </TaskBar>
);

/* ---------- Page ---------- */

const menu: [string, number, number][] = [
  ["File", 0, 46.5], ["Edit", 0, 50], ["Hierarchy", 1, 94], ["View", 0, 57],
  ["Simulate", 0, 88], ["Tools", 0, 61.5], ["Window", 0, 85.5], ["Help", 0, 50],
];

export default function App() {
  return (
    <Desktop>
      <Global />
      <TitleBar>
        <LtLogo />
        <AppTitle>LTspice XVII - 5v3v3_Levelshifter.asc</AppTitle>
        <CaptionButton><svg width="16" height="16"><path d="M0 8.500h15" stroke="#000" shapeRendering="crispEdges" /></svg></CaptionButton>
        <CaptionButton><svg width="18" height="16" fill="none" stroke="#000" shapeRendering="crispEdges"><path d="M.5 3.500h11v11H.5zM3.500 3V.5h12v11H12" /></svg></CaptionButton>
        <CaptionButton><svg width="16" height="16" stroke="#000"><path d="M.5 .5l15 15M15.500 .5l-15 15" strokeWidth="1.200" /></svg></CaptionButton>
      </TitleBar>
      <MenuBar>
        {menu.map(([t, k, w]) => (
          <MenuItem key={t} $w={w}>{t.slice(0, k)}<Key>{t[k]}</Key>{t.slice(k + 1)}</MenuItem>
        ))}
      </MenuBar>
      <ToolStrip>
        <ToolBar>
          <Grip />
          {toolGroups.map((group, g) => (
            <React.Fragment key={g}>
              {g > 0 && <ToolSeparator />}
              {group.map((icon, i) => <Tool key={i}>{icon}</Tool>)}
            </React.Fragment>
          ))}
        </ToolBar>
      </ToolStrip>
      <MdiArea>
        <TabStrip>
          <Tab $active $track={-0.06}><Transistor w={14} size={18} />5v3v3_Levelshifter.asc</Tab>
          <Tab $track={-0.16}><PlotIcon size={17} grey />5v3v3_Levelshifter.raw</Tab>
        </TabStrip>
        <Child>
          <ChildTitle>
            <PlotIcon grey />
            <ChildName>5v3v3_Levelshifter.raw</ChildName>
            <Controls />
          </ChildTitle>
          <Client $dark><Plot /></Client>
        </Child>
        <Child $active>
          <ChildTitle $active>
            <Transistor />
            <ChildName>5v3v3_Levelshifter.asc</ChildName>
            <Controls active />
          </ChildTitle>
          <Client><Schematic /></Client>
        </Child>
      </MdiArea>
      <StatusBar />
      <Task />
      <Overlay width="1920" height="1080" viewBox="0 0 1920 1080">
        <path d="M209 483.500L391 878" stroke="#0040cc" strokeWidth="3" />
        <path d="M396.500 889.500L383.500 876L391 878.500L395.500 871Z" fill="#0040cc" />
        <path d="M1475.500 523L1202 882" stroke="#00ff50" strokeWidth="3" />
        <path d="M1194 893.500L1198.500 876.500L1202 882L1209.500 883Z" fill="#00ff50" />
        <path d="M558.500 486V508" stroke="#c80000" strokeWidth="3" />
        <path d="M558.500 521.500L552.500 504L558.500 507L564.500 504Z" fill="#c80000" />
        <text x="571" y="484.700" fontFamily={UI} fontSize="25" fill="#fff" textLength="392" lengthAdjust="spacingAndGlyphs">shifted logic-0 up to 0.6-ish, why?</text>
      </Overlay>
    </Desktop>
  );
}
